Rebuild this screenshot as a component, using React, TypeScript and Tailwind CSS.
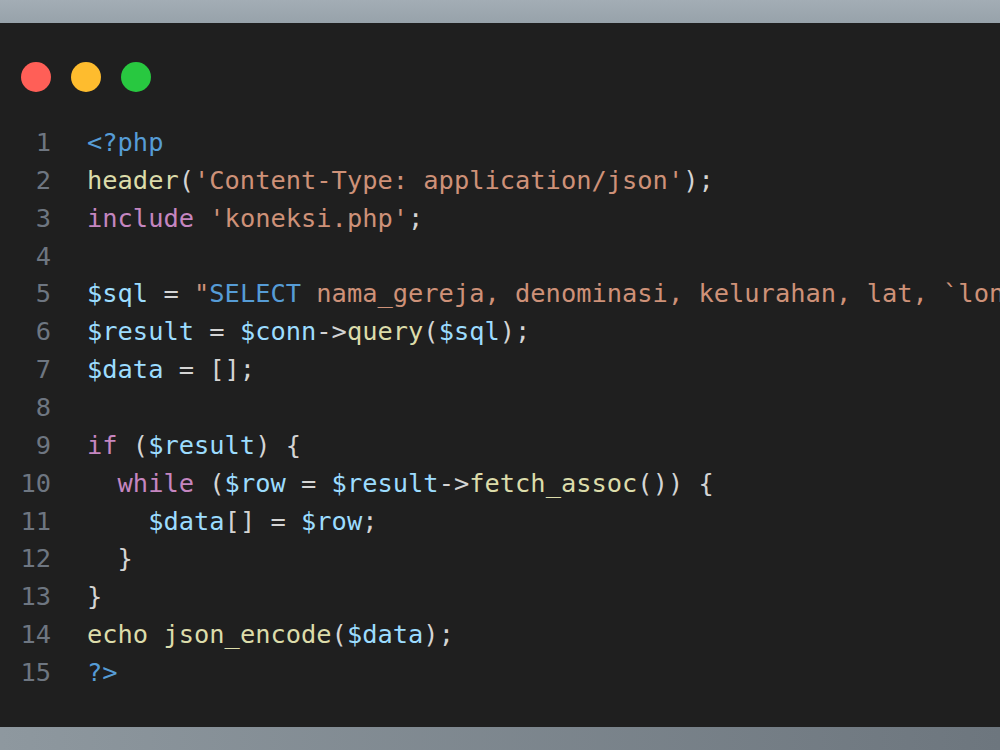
import React from "react";

type Tok = [string, string];

const C = {
  tag: "text-[#569cd6]",
  fn: "text-[#dcdcaa]",
  str: "text-[#ce9178]",
  kw: "text-[#c586c0]",
  vr: "text-[#9cdcfe]",
  p: "text-[#d4d4d4]",
};

const lines: Tok[][] = [
  [["<?php", C.tag]],
  [
    ["header", C.fn],
    ["(", C.p],
    ["'Content-Type: application/json'", C.str],
    [");", C.p],
  ],
  [
    ["include", C.kw],
    [" ", C.p],
    ["'koneksi.php'", C.str],
    [";", C.p],
  ],
  [],
  [
    ["$sql", C.vr],
    [" = ", C.p],
    ['"', C.str],
    ["SELECT", C.tag],
    [" nama_gereja, denominasi, kelurahan, lat, `long` FROM gereja\"", C.str],
    [";", C.p],
  ],
  [
    ["$result", C.vr],
    [" = ", C.p],
    ["$conn", C.vr],
    ["->", C.p],
    ["query", C.fn],
    ["(", C.p],
    ["$sql", C.vr],
    [");", C.p],
  ],
  [
    ["$data", C.vr],
    [" = [];", C.p],
  ],
  [],
  [
    ["if", C.kw],
    [" (", C.p],
    ["$result", C.vr],
    [") {", C.p],
  ],
  [
    ["  ", C.p],
    ["while", C.kw],
    [" (", C.p],
    ["$row", C.vr],
    [" = ", C.p],
    ["$result", C.vr],
    ["->", C.p],
    ["fetch_assoc", C.fn],
    ["()) {", C.p],
  ],
  [
    ["    ", C.p],
    ["$data", C.vr],
    ["[] = ", C.p],
    ["$row", C.vr],
    [";", C.p],
  ],
  [["  }", C.p]],
  [["}", C.p]],
  [
    ["echo", C.fn],
    [" ", C.p],
    ["json_encode", C.fn],
    ["(", C.p],
    ["$data", C.vr],
    [");", C.p],
  ],
  [["?>", C.tag]],
];

export default function App() {
  return (
    <div className="w-[1000px] h-[750px] flex flex-col overflow-hidden">
      <div className="h-[23px] shrink-0 bg-gradient-to-b from-[#a3adb5] to-[#97a2aa]" />
      <div className="flex-1 bg-[#1f1f1f] flex flex-col overflow-hidden">
        <div className="flex gap-[20px] pl-[21px] pt-[39px]">
          <span className="w-[30px] h-[30px] rounded-full bg-[#ff5f57]" />
          <span className="w-[30px] h-[30px] rounded-full bg-[#febc2e]" />
          <span className="w-[30px] h-[30px] rounded-full bg-[#28c840]" />
        </div>
        <div
          className="mt-[32px] flex flex-col text-[25.4px] leading-[37.86px] whitespace-pre"
          style={{ fontFamily: '"DejaVu Sans Mono", "Liberation Mono", monospace' }}
        >
          {lines.map((toks, i) => (
            <div key={i} className="flex h-[37.86px]">
              <span className="w-[51px] shrink-0 text-right text-[#6e7681]">{i + 1}</span>
              <span className="pl-[36px]">
                {toks.map(([t, c], j) => (
                  <span key={j} className={c}>
                    {t}
                  </span>
                ))}
              </span>
            </div>
          ))}
        </div>
      </div>
      <div className="h-[23px] shrink-0 bg-gradient-to-r from-[#8e989f] to-[#6d767e]" />
    </div>
  );
}
